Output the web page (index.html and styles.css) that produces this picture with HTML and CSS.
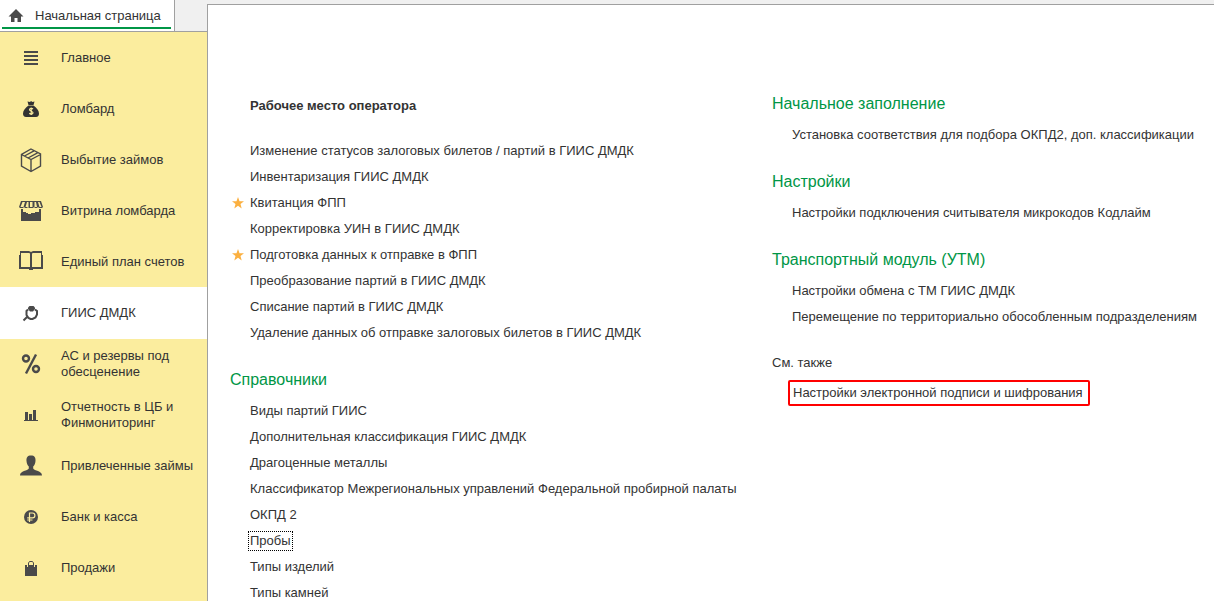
FILE: index.html
```html
<!DOCTYPE html>
<html lang="ru">
<head>
<meta charset="utf-8">
<title>Начальная страница</title>
<link rel="stylesheet" href="styles.css">
</head>
<body>
<div class="app">
  <div class="side">
    <div class="tabs">
      <button class="tab" type="button">
        <svg class="home" width="16" height="14" viewBox="0 0 16 14"><path d="M8 0 15.500 7.500H13V13H9.500V9H6.500V13H3V7.500H.5Z" fill="#4a4a4a"/></svg>
        <span>Начальная страница</span>
      </button>
    </div>
    <nav class="menu">
      <a class="item" href="#"><svg class="icon" viewBox="0 0 30 30"><path d="M8 8h14v2H8zM8 12h14v2H8zM8 16h14v2H8zM8 20h14v2H8z"/></svg><span>Главное</span></a>
      <a class="item" href="#"><svg class="icon" viewBox="0 0 30 30"><path class="dark" d="M11.500 7.500 14 8l1-1 1.500 1 2-.5L17.500 11h-5zM12.500 11.500h5c3 2 5.500 5 5.500 8 0 2-1 3.500-3 3.500H10c-2 0-3-1.500-3-3.500 0-3 2.500-6 5.500-8z"/><path class="cut" d="M17 15c-1-1-3.500-.8-3.500.8s3.500 1.200 3.500 2.900-2.500 1.700-3.700.6M15.200 13.500v7.500"/></svg><span>Ломбард</span></a>
      <a class="item" href="#"><svg class="icon" viewBox="0 0 30 30"><path class="line" d="M15 4 24.500 9v12L15 26.500 5.500 21V9.500zM5.500 9.500 15 14.500 24.500 9.500M15 14.500V26.500M8.500 11 18 5.800M12 13 21.500 7.800"/></svg><span>Выбытие займов</span></a>
      <a class="item" href="#"><svg class="icon" viewBox="0 0 30 30"><path fill-rule="evenodd" d="M5 5h20l2 6-1 1h-3l-1-1-1 1h-2l-1-1-1 1h-4l-1-1-1 1H9l-1-1-1 1H4l-1-1zM6.500 6 4.500 11H7.500L9 6zM11 6 9.500 11H12.500V6zM14 6v5h2.500V6zM18.500 6v5h2.500l-1-5zM22 6l1.500 5h2l-2-5z"/><path d="M5 13h2v3h3v1h2v1h3v-1h4v-1h4v-3h2v12H5z"/></svg><span>Витрина ломбарда</span></a>
      <a class="item" href="#"><svg class="icon" viewBox="0 0 30 30"><path fill-rule="evenodd" d="M4 4h9l2 1 2-1h9v4h1v14H17v1h-4v-1H3V8h1zM5 6v14H14V6.500l-1-.5zM16 6.500v13.500h9V6h-8z"/></svg><span>Единый план счетов</span></a>
      <a class="item active" href="#"><svg class="icon" viewBox="0 0 30 30"><path d="M12 9.500 13.500 8h4L19 9.500V11l-2 2.500h-3L12 11z"/><path class="ring" d="M12 11.500 10.500 13v4l2 3 2 1h2l3-1.500 1.500-3V13L19 11.500M11.500 18.500 7.500 22.500"/></svg><span>ГИИС ДМДК</span></a>
      <a class="item" href="#"><svg class="icon" viewBox="0 0 30 30"><g class="percent"><circle cx="10" cy="9.500" r="3"/><circle cx="20" cy="20" r="3"/><path d="M20 5.500 10 24.500"/></g></svg><span>АС и резервы под обесценение</span></a>
      <a class="item" href="#"><svg class="icon" viewBox="0 0 30 30"><path d="M9 12h3v8h1v-6h3v6h1V10h3v10h2v1H8v-1h1z"/></svg><span>Отчетность в ЦБ и Финмониторинг</span></a>
      <a class="item" href="#"><svg class="icon" viewBox="0 0 30 30"><path d="M15 4.500c3.500 0 4.800 2 4.500 5.500-.2 2.500-1 4.500-2.300 5.500v2c1 2.500 8.800 2 8.800 7H4c0-5 7.800-4.500 8.800-7v-2c-1.300-1-2.100-3-2.300-5.500C10.200 6.500 11.500 4.500 15 4.500z"/></svg><span>Привлеченные займы</span></a>
      <a class="item" href="#"><svg class="icon" viewBox="0 0 30 30"><circle cx="15" cy="15" r="7"/><path class="cut" d="M13.500 20v-9H16.500a2.300 2.300 0 0 1 0 4.800H11.200M11.200 18H16.500"/></svg><span>Банк и касса</span></a>
      <a class="item" href="#"><svg class="icon" viewBox="0 0 30 30"><path d="M9 12h2v2h2v-2h4v2h2v-2h2v11H9z"/><path class="handle" d="M12.500 14v-4l1-1.500h3l1 1.500v4"/></svg><span>Продажи</span></a>
    </nav>
  </div>
  <main class="panel">
    <div class="column">
      <section class="group first">
        <h2 class="title strong">Рабочее место оператора</h2>
        <ul class="links">
          <li><a href="#">Изменение статусов залоговых билетов / партий в ГИИС ДМДК</a></li>
          <li><a href="#">Инвентаризация ГИИС ДМДК</a></li>
          <li class="starred"><svg class="star" viewBox="0 0 12 12"><path d="M6 0 7.500 4.200H12L8.500 7 9.700 11.500 6 8.800 2.300 11.500 3.500 7 0 4.200H4.500Z"/></svg><a href="#">Квитанция ФПП</a></li>
          <li><a href="#">Корректировка УИН в ГИИС ДМДК</a></li>
          <li class="starred"><svg class="star" viewBox="0 0 12 12"><path d="M6 0 7.500 4.200H12L8.500 7 9.700 11.500 6 8.800 2.300 11.500 3.500 7 0 4.200H4.500Z"/></svg><a href="#">Подготовка данных к отправке в ФПП</a></li>
          <li><a href="#">Преобразование партий в ГИИС ДМДК</a></li>
          <li><a href="#">Списание партий в ГИИС ДМДК</a></li>
          <li><a href="#">Удаление данных об отправке залоговых билетов в ГИИС ДМДК</a></li>
        </ul>
      </section>
      <section class="group">
        <h2 class="title">Справочники</h2>
        <ul class="links">
          <li><a href="#">Виды партий ГИИС</a></li>
          <li><a href="#">Дополнительная классификация ГИИС ДМДК</a></li>
          <li><a href="#">Драгоценные металлы</a></li>
          <li><a href="#">Классификатор Межрегиональных управлений Федеральной пробирной палаты</a></li>
          <li><a href="#">ОКПД 2</a></li>
          <li><a class="focused" href="#">Пробы</a></li>
          <li><a href="#">Типы изделий</a></li>
          <li><a href="#">Типы камней</a></li>
        </ul>
      </section>
    </div>
    <div class="column">
      <section class="group">
        <h2 class="title">Начальное заполнение</h2>
        <ul class="links">
          <li><a href="#">Установка соответствия для подбора ОКПД2, доп. классификации</a></li>
        </ul>
      </section>
      <section class="group">
        <h2 class="title">Настройки</h2>
        <ul class="links">
          <li><a href="#">Настройки подключения считывателя микрокодов Кодлайм</a></li>
        </ul>
      </section>
      <section class="group">
        <h2 class="title">Транспортный модуль (УТМ)</h2>
        <ul class="links">
          <li><a href="#">Настройки обмена с ТМ ГИИС ДМДК</a></li>
          <li><a href="#">Перемещение по территориально обособленным подразделениям</a></li>
        </ul>
      </section>
      <section class="group">
        <h2 class="title plain">См. также</h2>
        <ul class="links">
          <li><a class="marked" href="#">Настройки электронной подписи и шифрования</a></li>
        </ul>
      </section>
    </div>
  </main>
</div>
</body>
</html>
```

FILE: styles.css
```css
* { box-sizing: border-box; }
body {
  margin: 0;
  background: #f0f0f0;
  color: #333;
  font: 13px/16px "Liberation Sans", Arial, sans-serif;
}
a { color: inherit; text-decoration: none; }
.app {
  display: flex;
  height: 100vh;
  overflow: hidden;
}
.side {
  flex: none;
  width: 207px;
  display: flex;
  flex-direction: column;
}
.tabs {
  flex: none;
  display: flex;
  height: 32px;
  border-bottom: 1px solid #a0a0a0;
}
.tab {
  display: flex;
  align-items: center;
  gap: 11px;
  width: 175px;
  padding: 0 0 0 8px;
  border: 0;
  border-right: 1px solid #a0a0a0;
  background: linear-gradient(#009646, #009646) 2px 27px / 169px 2px no-repeat #fff;
  color: inherit;
  font: inherit;
  white-space: nowrap;
}
.home { flex: none; }
.menu {
  flex: 1;
  background: #fbed9e;
}
.item {
  display: flex;
  align-items: center;
  gap: 15px;
  height: 51px;
  padding: 1px 12px 0 16px;
}
.active {
  background: #fff;
  box-shadow: 0 1px #fff;
}
.icon {
  flex: none;
  width: 30px;
  height: 30px;
  fill: #4a4a4a;
}
.icon .dark { fill: #333; }
.icon .cut { fill: none; stroke: #fbed9e; stroke-width: 1.2; }
.icon .line { fill: none; stroke: #4a4a4a; stroke-width: 1.4; }
.icon .ring { fill: none; stroke: #4a4a4a; stroke-width: 2; }
.icon .handle { fill: none; stroke: #4a4a4a; stroke-width: 1; }
.percent { fill: none; stroke: #4a4a4a; stroke-width: 2.4; }
.panel {
  flex: 1;
  min-width: 0;
  margin-top: 4px;
  padding: 86px 22px 0 22px;
  display: grid;
  grid-template-columns: 542px 1fr;
  border: solid #a0a0a0;
  border-width: 1px 0 0 1px;
  background: #fff;
}
.group { margin-bottom: 21px; }
.first { padding-top: 2px; }
.title {
  margin: 0 0 5px;
  color: #009646;
  font-size: 16px;
  font-weight: normal;
  line-height: 26px;
}
.strong {
  margin: 0 0 19px;
  padding-left: 20px;
  color: #333;
  font-size: 13px;
  font-weight: bold;
}
.plain {
  margin-bottom: 5px;
  color: #333;
  font-size: 13px;
  line-height: 24px;
}
.links {
  margin: 0;
  padding: 0 0 0 20px;
  list-style: none;
}
.links li {
  display: flex;
  align-items: center;
  height: 26px;
  white-space: nowrap;
}
.starred { margin-left: -18px; gap: 6px; }
.star {
  flex: none;
  width: 12px;
  height: 12px;
  fill: #fbb040;
}
.focused {
  margin-left: -2px;
  padding: 1px;
  border: 1px dotted #000;
}
.marked {
  margin-left: -4px;
  padding: 3px 5px 3px 3px;
  border: 2px solid #f00;
  border-radius: 2px;
}
```
